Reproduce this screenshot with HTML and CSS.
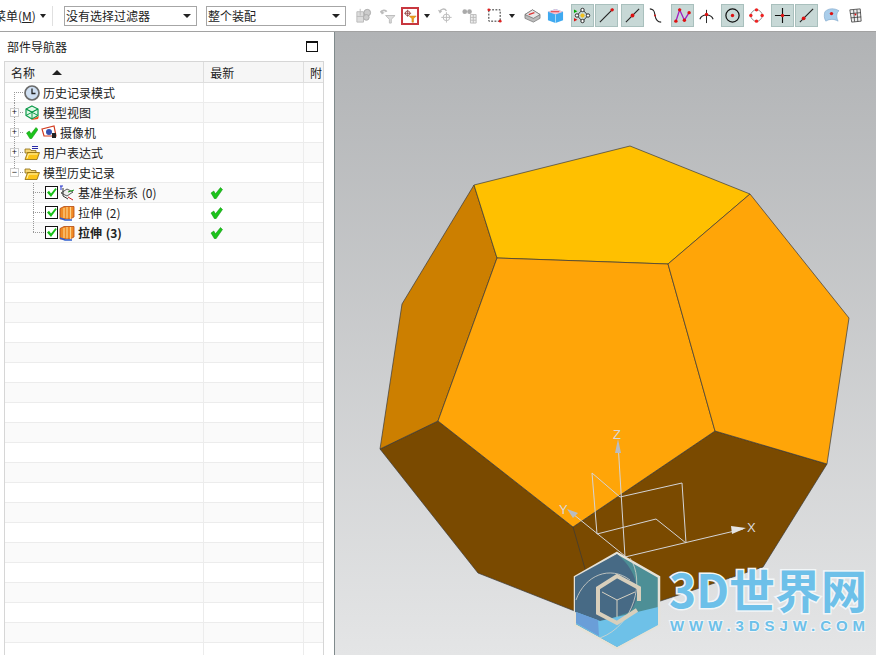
FILE: index.html
```html
<!DOCTYPE html>
<html lang="zh-CN">
<head>
  <meta charset="UTF-8">
  <title>部件导航器</title>
  <link rel="stylesheet" href="styles.css">
</head>
<body>
  <svg class="defs" width="0" height="0">
    <symbol id="tick" viewBox="0 0 12 12"><path d="M.5 6 3.300 4 5 6.800 10 .5 12 2.500 5.500 11.800h-1.500z" fill="#1cc41c" stroke="#0b8f0b" stroke-width=".5"/></symbol>
    <symbol id="checkbox" viewBox="0 0 13 13"><rect x=".5" y=".5" width="12" height="12" fill="#fff" stroke="#111"/><path d="M2 6.500 4 4.800l2 2.700L10.500 2l1.200 1.200L6 11z" fill="#18c018"/></symbol>
    <symbol id="folder" viewBox="0 0 16 16"><path d="M1 4h5l1 1.500h5V8H1z" fill="#f7d774" stroke="#8a6a10" stroke-width=".8"/><path d="M1 14.500 3.500 7.500H15.500L13 14.500z" fill="#fcc419" stroke="#8a6a10" stroke-width=".8"/><path d="M3 13.500 4.500 9h9" fill="none" stroke="#fff3b0"/></symbol>
    <symbol id="extrude" viewBox="0 0 16 16"><path d="M1 3.500 5 1.500H15V12L11 14H1z" fill="#f08a24" stroke="#b3480f" stroke-width=".8"/><path d="M5 3V13M8 2V13.500M11.500 2V14" stroke="#fbd38a" stroke-width="1.200"/><path d="M1 13 6 15h7" stroke="#2f5fd0" stroke-width="1.400" fill="none"/></symbol>
  </svg>

  <div class="toolbar">
    <span class="menu-btn">菜单(<u>M</u>)</span>
    <span class="arrow arrow-menu"></span>
    <span class="sep"></span>
    <div class="select select-filter"><span>没有选择过滤器</span><i class="arrow"></i></div>
    <div class="select select-scope"><span>整个装配</span><i class="arrow"></i></div>

    <div class="tool first"><svg viewBox="0 0 18 18"><path d="M2 5h7v11H2zM2 10h7M5.500 2v7" fill="#ddd" stroke="#bbb"/><circle cx="13" cy="6" r="3.500" fill="#ccc" stroke="#aaa"/><circle cx="12" cy="11" r="3" fill="#ccc" stroke="#aaa"/></svg></div>
    <div class="tool ml2 tight"><svg viewBox="0 0 18 18"><path d="M2 6c1-3 5-3 6-1" fill="none" stroke="#bbb" stroke-width="2"/><path d="M1 4l2 4 3-2z" fill="#bbb"/><path d="M7 9h10l-4 4v4h-2v-4z" fill="#ddd" stroke="#bbb"/></svg></div>
    <div class="tool boxed"><svg viewBox="0 0 18 18"><circle cx="6" cy="5.500" r="3" fill="none" stroke="#8a3030"/><path d="M6 1v9M1.500 5.500h9" stroke="#8a3030"/><path d="M8 9h9l-3.500 3.500V17h-2v-4.500z" fill="#f0a020" stroke="#c07a10" stroke-width=".6"/></svg></div>
    <span class="arrow ml2 tool-arrow"></span>
    <div class="tool ml3"><svg viewBox="0 0 18 18"><path d="M3 5c1-3 5-4 7-1" fill="none" stroke="#bbb" stroke-width="1.500"/><path d="M1 3l2 4 2.500-2.500z" fill="#bbb"/><circle cx="10" cy="11" r="3.500" fill="none" stroke="#bbb"/><path d="M10 5.500v11M4.500 11h11" stroke="#bbb"/></svg></div>
    <div class="tool ml1"><svg viewBox="0 0 18 18"><circle cx="4" cy="5" r="2.500" fill="#aaa"/><circle cx="9" cy="5" r="2.500" fill="#aaa"/><path d="M10 8h6v9h-6zM10 11h6M10 14h6M13 8v9" fill="#eee" stroke="#bbb"/></svg></div>
    <div class="tool ml2"><svg viewBox="0 0 18 18"><rect x="3" y="3" width="12" height="12" fill="none" stroke="#222" stroke-dasharray="2 1.500"/><circle cx="3" cy="3" r="1.500" fill="#d22"/><circle cx="15" cy="15" r="1.500" fill="#d22"/></svg></div>
    <span class="arrow ml3 tool-arrow"></span>
    <div class="tool ml5"><svg viewBox="0 0 18 18"><path d="M1 8 9 3l8 5v4l-7 4-9-4z" fill="#bbb" stroke="#555" stroke-width=".6"/><path d="M1 8l9 4 7-4-8-5z" fill="#e8e8e8" stroke="#555" stroke-width=".6"/><path d="M5 8l6-2" stroke="#d33" stroke-width="1.500"/></svg></div>
    <div class="tool"><svg viewBox="0 0 18 18"><path d="M1 5 9 2l8 3v9l-8 3-8-3z" fill="#3fa9f0"/><path d="M1 5l8-3 8 3-8 3z" fill="#f6c6d6"/><path d="M9 8v9" stroke="#a9dcf8"/><path d="M4 5l9 0" stroke="#e03030"/></svg></div>
    <div class="tool active ml4"><svg viewBox="0 0 20 20"><path d="M10 3 3.500 10 10 17l6.500-7z" fill="none" stroke="#222"/><circle cx="10" cy="10" r="2.500" fill="#f0c020"/><circle cx="10" cy="3.500" r="2" fill="#fff" stroke="#111"/><circle cx="10" cy="16.500" r="2" fill="#fff" stroke="#111"/><circle cx="3.500" cy="10" r="2" fill="#fff" stroke="#111"/><circle cx="16.500" cy="10" r="2" fill="#fff" stroke="#111"/><path d="M0 3l4 2-4 2z" fill="#0a0"/><path d="M0 13l4 2-4 2z" fill="#d11"/></svg></div>
    <div class="tool active ml1"><svg viewBox="0 0 18 18"><path d="M2 16 16 2" stroke="#222" stroke-width="1.200"/><circle cx="15" cy="3" r="1.800" fill="#d11"/></svg></div>
    <div class="tool active ml3"><svg viewBox="0 0 18 18"><path d="M2 16 16 2" stroke="#222" stroke-width="1.200"/><circle cx="9" cy="9" r="2" fill="#d11"/></svg></div>
    <div class="tool"><svg viewBox="0 0 18 18"><path d="M3 2c5 0 5 4 5.500 7s2 7 6.500 7" fill="none" stroke="#222" stroke-width="1.200"/><circle cx="8.500" cy="9" r="1" fill="#d11"/></svg></div>
    <div class="tool active ml4"><svg viewBox="0 0 18 18"><path d="M2 15 6 3l5 11 5-8" fill="none" stroke="#a020c0" stroke-width="1.400"/><circle cx="2" cy="15" r="1.800" fill="#d11"/><circle cx="6" cy="3" r="1.800" fill="#d11"/><circle cx="11" cy="14" r="1.800" fill="#d11"/><circle cx="16" cy="6" r="1.800" fill="#d11"/></svg></div>
    <div class="tool ml1"><svg viewBox="0 0 18 18"><path d="M2 13C4 7 14 7 16 13" fill="none" stroke="#222" stroke-width="1.200"/><path d="M9 3v14" stroke="#222"/><circle cx="9" cy="8" r="1.800" fill="#d11"/></svg></div>
    <div class="tool active ml3"><svg viewBox="0 0 18 18"><circle cx="9" cy="9" r="7" fill="none" stroke="#111" stroke-width="1.300"/><circle cx="9" cy="9" r="1.800" fill="#d11"/></svg></div>
    <div class="tool ml1"><svg viewBox="0 0 18 18"><circle cx="9" cy="9" r="6" fill="none" stroke="#888"/><circle cx="9" cy="3" r="1.800" fill="#e22"/><circle cx="9" cy="15" r="1.800" fill="#e22"/><circle cx="3" cy="9" r="1.800" fill="#e22"/><circle cx="15" cy="9" r="1.800" fill="#e22"/></svg></div>
    <div class="tool active ml3"><svg viewBox="0 0 18 18"><path d="M1 9h16M9 1v16" stroke="#111" stroke-width="1.200"/><circle cx="9" cy="9" r="1.800" fill="#d11"/></svg></div>
    <div class="tool active ml1"><svg viewBox="0 0 18 18"><path d="M2 16 16 2" stroke="#222" stroke-width="1.200"/><circle cx="6" cy="12" r="2" fill="#d11"/></svg></div>
    <div class="tool ml2"><svg viewBox="0 0 18 18"><path d="M2 5c4-4 10-4 15-1-3 2-3 7-1 11-5-3-10-2-13 0-2-3-2-7-1-10z" fill="#a9cdea" stroke="#7ba3c8" stroke-width=".6"/><circle cx="9" cy="7" r="1.800" fill="#d11"/></svg></div>
    <div class="tool ml1"><svg viewBox="0 0 18 18"><path d="M3 3 14 2l1 13-10 1zM3.500 7 14.500 6M4 11.500 15 10.500M7 3l1 12.500M10.500 2.500 11.500 15.500" fill="#eee" stroke="#333" stroke-width=".8"/><circle cx="9" cy="8" r="1" fill="#d11"/></svg></div>
  </div>

  <div class="main">
    <div class="nav-panel">
      <div class="nav-title">
        <span>部件导航器</span>
        <span class="maximize"></span>
      </div>
      <div class="tree">
        <div class="row head">
          <span class="col-name">名称<i class="sort-up"></i></span>
          <span class="col-new">最新</span>
          <span class="col-att">附</span>
        </div>

        <div class="row">
          <span class="col-name"><i class="guide guide-first"></i>
            <svg class="ico" viewBox="0 0 16 16"><circle cx="8" cy="8" r="7" fill="#cfdff2" stroke="#6b6b6b" stroke-width="1.700"/><path d="M8 3.500V8.500H11.500" fill="none" stroke="#222" stroke-width="1.300"/></svg>
            历史记录模式</span>
          <span class="col-new"></span><span class="col-att"></span>
        </div>
        <div class="row">
          <span class="col-name"><i class="guide"><b class="exp">+</b></i>
            <svg class="ico" viewBox="0 0 16 16"><path d="M8 1l6 3v6.500L8 14l-6-3.500V4z" fill="#dff8e6" stroke="#0d9a4a" stroke-width="1.200"/><path d="M2 4l6 3 6-3M8 7v7M2 10.500 14 4M14 10.500 2 4" fill="none" stroke="#0d9a4a"/><path d="M7 15 15 11l-1 3z" fill="#e8501c"/></svg>
            模型视图</span>
          <span class="col-new"></span><span class="col-att"></span>
        </div>
        <div class="row">
          <span class="col-name"><i class="guide"><b class="exp">+</b></i>
            <svg class="tick-tree"><use href="#tick"/></svg>
            <svg class="ico ico-cam" viewBox="0 0 16 16"><path d="M1 4 13 1l2 10H3z" fill="#fff" stroke="#d23c20" stroke-width="1.200"/><circle cx="8" cy="7" r="3" fill="#3550b0"/><path d="M11 8h4v5h-4z" fill="#222"/></svg>
            摄像机</span>
          <span class="col-new"></span><span class="col-att"></span>
        </div>
        <div class="row">
          <span class="col-name"><i class="guide"><b class="exp">+</b></i>
            <svg class="ico" viewBox="0 0 16 16"><use href="#folder"/><path d="M8 1.500h6M8 3.500h6" stroke="#2b2ba8"/></svg>
            用户表达式</span>
          <span class="col-new"></span><span class="col-att"></span>
        </div>
        <div class="row">
          <span class="col-name"><i class="guide guide-last"><b class="exp">−</b></i>
            <svg class="ico" viewBox="0 0 16 16"><use href="#folder"/></svg>
            模型历史记录</span>
          <span class="col-new"></span><span class="col-att"></span>
        </div>
        <div class="row">
          <span class="col-name"><i class="guide-kid"></i>
            <svg class="check"><use href="#checkbox"/></svg>
            <svg class="ico" viewBox="0 0 16 16"><path d="M2 8 8 4l6 3-6 4z" fill="#eee" stroke="#333" stroke-width=".8"/><path d="M4 3v8l5 3" fill="none" stroke="#333"/><path d="M1 1h3" stroke="#2233cc"/><path d="M2 1v4" stroke="#2233cc"/><path d="M9 7l6-2" stroke="#19a019"/><path d="M9 12l5 3" stroke="#c82020"/></svg>
            基准坐标系 (0)</span>
          <span class="col-new"><svg class="tick"><use href="#tick"/></svg></span><span class="col-att"></span>
        </div>
        <div class="row">
          <span class="col-name"><i class="guide-kid"></i>
            <svg class="check"><use href="#checkbox"/></svg>
            <svg class="ico"><use href="#extrude"/></svg>
            拉伸 (2)</span>
          <span class="col-new"><svg class="tick"><use href="#tick"/></svg></span><span class="col-att"></span>
        </div>
        <div class="row current">
          <span class="col-name"><i class="guide-kid guide-kid-last"></i>
            <svg class="check"><use href="#checkbox"/></svg>
            <svg class="ico"><use href="#extrude"/></svg>
            拉伸 (3)</span>
          <span class="col-new"><svg class="tick"><use href="#tick"/></svg></span><span class="col-att"></span>
        </div>

        <!-- empty rows -->
        <div class="row"><span class="col-name"></span><span class="col-new"></span><span class="col-att"></span></div>
        <div class="row"><span class="col-name"></span><span class="col-new"></span><span class="col-att"></span></div>
        <div class="row"><span class="col-name"></span><span class="col-new"></span><span class="col-att"></span></div>
        <div class="row"><span class="col-name"></span><span class="col-new"></span><span class="col-att"></span></div>
        <div class="row"><span class="col-name"></span><span class="col-new"></span><span class="col-att"></span></div>
        <div class="row"><span class="col-name"></span><span class="col-new"></span><span class="col-att"></span></div>
        <div class="row"><span class="col-name"></span><span class="col-new"></span><span class="col-att"></span></div>
        <div class="row"><span class="col-name"></span><span class="col-new"></span><span class="col-att"></span></div>
        <div class="row"><span class="col-name"></span><span class="col-new"></span><span class="col-att"></span></div>
        <div class="row"><span class="col-name"></span><span class="col-new"></span><span class="col-att"></span></div>
        <div class="row"><span class="col-name"></span><span class="col-new"></span><span class="col-att"></span></div>
        <div class="row"><span class="col-name"></span><span class="col-new"></span><span class="col-att"></span></div>
        <div class="row"><span class="col-name"></span><span class="col-new"></span><span class="col-att"></span></div>
        <div class="row"><span class="col-name"></span><span class="col-new"></span><span class="col-att"></span></div>
        <div class="row"><span class="col-name"></span><span class="col-new"></span><span class="col-att"></span></div>
        <div class="row"><span class="col-name"></span><span class="col-new"></span><span class="col-att"></span></div>
        <div class="row"><span class="col-name"></span><span class="col-new"></span><span class="col-att"></span></div>
        <div class="row"><span class="col-name"></span><span class="col-new"></span><span class="col-att"></span></div>
        <div class="row"><span class="col-name"></span><span class="col-new"></span><span class="col-att"></span></div>
        <div class="row"><span class="col-name"></span><span class="col-new"></span><span class="col-att"></span></div>
        <div class="row"><span class="col-name"></span><span class="col-new"></span><span class="col-att"></span></div>
      </div>
    </div>

    <div class="viewport">
      <svg class="scene" viewBox="335 32 541 623">
        <!-- dodecahedron faces -->
        <g stroke="#3a3a3a" stroke-width=".7" stroke-linejoin="round">
          <polygon fill="#7a4a00" points="380,449 438,421 573,527 715,431 827,464 763,567 600,621 478,573"/>
          <polygon fill="#cc7f00" points="474,185 497,258 438,421 380,449 402,304"/>
          <polygon fill="#ffc000" points="630,146 750,194 668,264 497,258 474,185"/>
          <polygon fill="#ffa508" points="497,258 668,264 715,431 573,527 438,421"/>
          <polygon fill="#ffa508" points="750,194 849,318 827,464 715,431 668,264"/>
          <path d="M573 527 600 621" fill="none"/>
        </g>

        <!-- datum triad -->
        <g class="triad">
          <path d="M618 443 625 557M568 510 625 556M625 557 743 529"/>
          <path d="M620 497 592 473 597 534 656 519 686 543 682 483 620 497"/>
        </g>
        <polygon fill="#b9bcc0" points="618,439 615,453 621,453"/>
        <polygon fill="#b9bcc0" points="567,509 573,518 578,513"/>
        <polygon fill="#e4e4e4" points="746,528 731,526 732,534"/>
        <text class="axis" x="613" y="439">Z</text>
        <text class="axis" x="747" y="532">X</text>
        <text class="axis" x="559" y="514">Y</text>

        <!-- watermark -->
        <polygon fill="#4d8f96" stroke="#e6e2d8" stroke-width="2.500" points="617,553 659,577 659,625 617,648 575,625 575,577"/>
        <path d="M617 554 575 577V612L600 621 612 618 630 612C640 600 642 575 617 554z" fill="#476a85"/>
        <path d="M658 607 658 625 617 647 576 624V612L600 621z" fill="#6ec1e8"/>
        <path d="M576 612 598 620 599 636 576 623z" fill="#6a9ed8"/>
        <path d="M630 558C645 580 635 625 600 638M576 600C585 575 610 565 630 580" fill="none" stroke="#d8d6cc" stroke-width=".8"/>
        <path class="logo-cube" d="M637 610 617 623 598 613V588L617 576 639 588V601"/>
        <path d="M602 592 617 600 635 592M617 600V617" fill="none" stroke="#d8d2c2"/>
        <text class="wm-big" x="669" y="608" textLength="198">3D世界网</text>
        <text class="wm-small" x="670" y="631" textLength="195">WWW.3DSJW.COM</text>
      </svg>
    </div>
  </div>
</body>
</html>
```

FILE: styles.css
```css
body {
  margin: 0;
  width: 876px;
  height: 655px;
  overflow: hidden;
  font-family: "Noto Sans CJK SC", "Liberation Sans", sans-serif;
  font-size: 12px;
  color: #222;
  background-color: #fff;
}

.defs {
  display: block;
  height: 0;
}

/* top toolbar */
.toolbar {
  display: flex;
  align-items: center;
  height: 31px;
  overflow: hidden;
  background-color: #fff;
  border-bottom: 1px solid #a2a2a2;
}

.menu-btn {
  margin-left: -6px;
  white-space: nowrap;
}

.arrow {
  display: inline-block;
  width: 0;
  height: 0;
  border-left: 3.5px solid transparent;
  border-right: 3.5px solid transparent;
  border-top: 4px solid #222;
}

.arrow-menu {
  margin-left: 4px;
}

.sep {
  width: 1px;
  height: 20px;
  background-color: #e0e0e0;
  margin: 0 11px 0 6px;
}

.select {
  display: flex;
  align-items: center;
  justify-content: space-between;
  box-sizing: border-box;
  height: 20px;
  padding: 0 5px 0 1px;
  border: 1px solid #a6a6a6;
}

.select .arrow {
  border-left-width: 4px;
  border-right-width: 4px;
}

.select-filter {
  width: 133px;
  margin-right: 9px;
}

.select-scope {
  width: 140px;
}

.tool {
  flex: none;
  display: flex;
  align-items: center;
  justify-content: center;
  box-sizing: border-box;
  width: 23px;
  height: 23px;
}

.tool svg {
  width: 17px;
  height: 17px;
}

.tool.first {
  margin-left: 6px;
}

.tool.tight {
  width: 22px;
}

.tool.active {
  background-color: #c7d8d6;
  border: 1px solid #a9c0bd;
}

.tool.boxed svg {
  box-sizing: border-box;
  padding: 1px;
  width: 16px;
  height: 16px;
  outline: 2px solid #c8373f;
  outline-offset: -1px;
}

.tool-arrow {
  flex: none;
  width: 0;
  margin-right: 1px;
}

.ml1 { margin-left: 1px; }
.ml2 { margin-left: 2px; }
.ml3 { margin-left: 3px; }
.ml4 { margin-left: 4px; }
.ml5 { margin-left: 5px; }

/* main area */
.main {
  display: flex;
  height: 623px;
}

.nav-panel {
  box-sizing: border-box;
  width: 335px;
  padding: 0 10px 0 4px;
  border-right: 1px solid #808a8c;
  background-color: #fff;
  overflow: hidden;
}

.nav-title {
  display: flex;
  align-items: center;
  justify-content: space-between;
  height: 29px;
  padding: 0 6px 0 3px;
}

.maximize {
  box-sizing: border-box;
  width: 12px;
  height: 11px;
  border: 1px solid #111;
  border-top-width: 2px;
}

/* navigator tree */
.tree {
  border: 1px solid #d6d6d6;
  border-width: 1px 1px 0 1px;
  height: 600px;
  overflow: hidden;
}

.row {
  display: flex;
  box-sizing: border-box;
  height: 20px;
  border-bottom: 1px solid #ececec;
}

.row:nth-child(odd) {
  background-color: #fafafa;
}

.row.head {
  height: 21px;
  background-color: #f6f6f6;
  border-bottom-color: #dedede;
}

.row.head span {
  border-right-color: #dedede;
  padding-left: 6px;
}

.row span {
  display: flex;
  align-items: center;
  box-sizing: border-box;
  white-space: nowrap;
  word-spacing: 1px;
  border-right: 1px solid #ececec;
}

.col-name {
  width: 200px;
}

.col-new {
  width: 100px;
  padding-left: 6px;
}

.col-att {
  width: 19px;
  overflow: hidden;
  border-right: none !important;
}

.sort-up {
  width: 0;
  height: 0;
  margin-left: 17px;
  border-left: 5px solid transparent;
  border-right: 5px solid transparent;
  border-bottom: 5px solid #222;
}

.current .col-name {
  font-weight: bold;
}

/* dotted tree lines */
.guide,
.guide-kid {
  --dots-y: repeating-linear-gradient(#999 0 1px, transparent 1px 2px);
  --dots-x: repeating-linear-gradient(90deg, #999 0 1px, transparent 1px 2px);
  position: relative;
  flex: none;
  align-self: stretch;
  margin-bottom: -1px;
  background-repeat: no-repeat;
}

.guide {
  width: 19px;
  background-image: var(--dots-y), var(--dots-x);
  background-position: 9px 0, 9px 9px;
  background-size: 1px 100%, 10px 1px;
}

.guide-first {
  background-position: 9px 9px, 9px 9px;
}

.guide-last {
  background-size: 1px 10px, 10px 1px;
}

.exp {
  position: absolute;
  left: 5px;
  top: 5px;
  display: flex;
  align-items: center;
  justify-content: center;
  box-sizing: border-box;
  width: 9px;
  height: 9px;
  font: normal 9px/1 "Liberation Sans", sans-serif;
  color: #111;
  background-color: #fff;
  border: 1px solid #cfcfcf;
}

.guide-kid {
  width: 40px;
  background-image: var(--dots-y), var(--dots-x);
  background-position: 28px 0, 28px 9px;
  background-size: 1px 100%, 12px 1px;
}

.guide-kid-last {
  background-size: 1px 10px, 12px 1px;
}

.ico {
  flex: none;
  width: 16px;
  height: 16px;
  margin-right: 3px;
}

.ico-cam {
  margin-left: 3px;
}

.tick-tree {
  flex: none;
  width: 12px;
  height: 12px;
  margin-left: 2px;
}

.check {
  flex: none;
  width: 13px;
  height: 13px;
  margin-right: 1px;
}

.tick {
  width: 13px;
  height: 12px;
}

/* graphics window */
.viewport {
  flex: 1;
  background: linear-gradient(#b1b3b5, #e4e5e6);
}

.scene {
  display: block;
  width: 541px;
  height: 623px;
}

.triad {
  fill: none;
  stroke: #d4d4d6;
  stroke-width: 1;
}

.axis {
  font: 13px "Liberation Sans", sans-serif;
  fill: #d8d8da;
}

.logo-cube {
  fill: none;
  stroke: #d8cfbc;
  stroke-width: 4;
}

.wm-big {
  font-family: "Noto Sans CJK SC", sans-serif;
  font-size: 46px;
  font-weight: 700;
  fill: #6dc0e9;
  stroke: #f2f6f8;
  stroke-width: 3;
  paint-order: stroke;
}

.wm-small {
  font-family: "Liberation Sans", sans-serif;
  font-size: 15px;
  font-weight: 700;
  fill: #6dc0e9;
  stroke: #f2f6f8;
  stroke-width: 2;
  paint-order: stroke;
}
```
